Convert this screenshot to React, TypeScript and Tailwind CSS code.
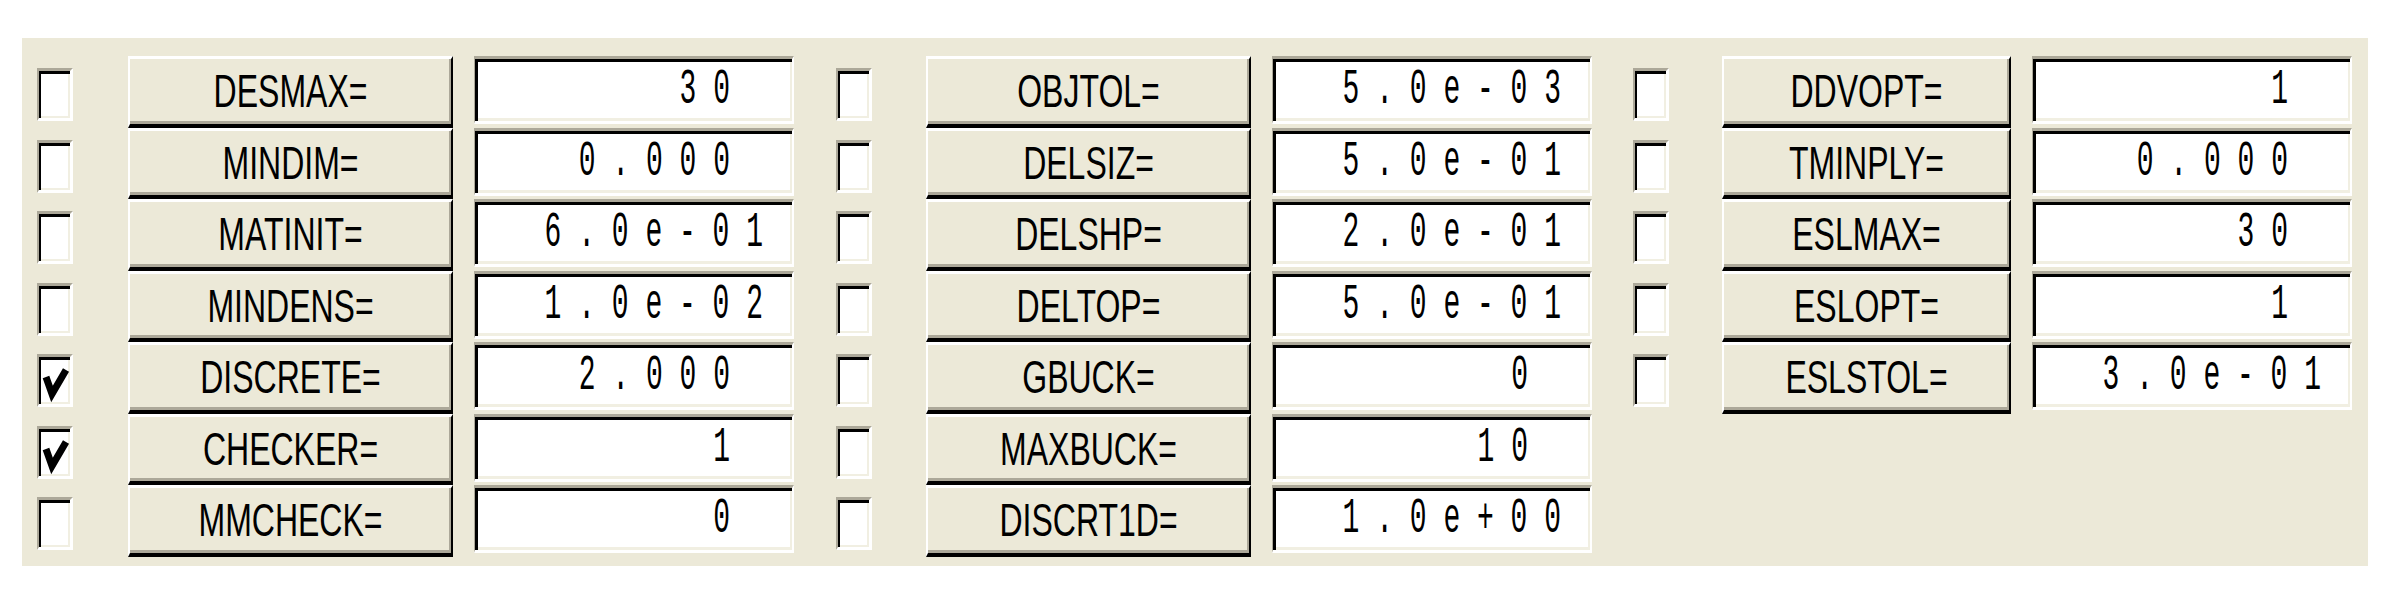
type Param = { label: string; value: string; checked?: boolean };

const col1: Param[] = [
  { label: "DESMAX=", value: "30" },
  { label: "MINDIM=", value: "0.000" },
  { label: "MATINIT=", value: "6.0e-01" },
  { label: "MINDENS=", value: "1.0e-02" },
  { label: "DISCRETE=", value: "2.000", checked: true },
  { label: "CHECKER=", value: "1", checked: true },
  { label: "MMCHECK=", value: "0" },
];

const col2: Param[] = [
  { label: "OBJTOL=", value: "5.0e-03" },
  { label: "DELSIZ=", value: "5.0e-01" },
  { label: "DELSHP=", value: "2.0e-01" },
  { label: "DELTOP=", value: "5.0e-01" },
  { label: "GBUCK=", value: "0" },
  { label: "MAXBUCK=", value: "10" },
  { label: "DISCRT1D=", value: "1.0e+00" },
];

const col3: Param[] = [
  { label: "DDVOPT=", value: "1" },
  { label: "TMINPLY=", value: "0.000" },
  { label: "ESLMAX=", value: "30" },
  { label: "ESLOPT=", value: "1" },
  { label: "ESLSTOL=", value: "3.0e-01" },
];

function CheckBox({ checked }: { checked?: boolean }) {
  return (
    <div className="mt-[12px] h-[53px] w-[36px] shrink-0 border-t-[3px] border-l-[2px] border-r-[3px] border-b-[3px] border-t-[#aca899] border-l-[#aca899] border-r-white border-b-white bg-white shadow-[inset_2px_3px_0_#000,inset_-2px_-2px_0_#f1efe2]">
      {checked && (
        <svg width="31" height="47" className="block" viewBox="0 0 31 47">
          <polyline
            points="7,20 13,37 27,13"
            fill="none"
            stroke="#000"
            strokeWidth="7"
            strokeLinejoin="miter"
            strokeMiterlimit="10"
          />
        </svg>
      )}
    </div>
  );
}

function Row({ p, btnW, cbGap }: { p: Param; btnW: string; cbGap: string }) {
  const exp = p.value.includes("e");
  return (
    <div className="flex h-[71.5px] items-start">
      <CheckBox checked={p.checked} />
      <div
        className={`${cbGap} ${btnW} flex h-full shrink-0 items-center justify-center border-t-[3px] border-l-[2px] border-r-[2px] border-b-[4px] border-t-white border-l-white border-r-black border-b-black bg-[#ece9d8] shadow-[inset_-2px_-3px_0_#aca899]`}
      >
        <span className="inline-block scale-y-[1.45] font-['Liberation_Sans',Arial,sans-serif] text-[32px] leading-none text-black">
          {p.label}
        </span>
      </div>
      <div
        className={`ml-[21px] flex h-[68px] w-[320px] shrink-0 items-center justify-end border-t-[3px] border-l-[1px] border-r-[2px] border-b-[3px] border-t-[#aca899] border-l-[#aca899] border-r-white border-b-white bg-white shadow-[inset_3px_3px_0_#000,inset_-2px_-3px_0_#f1efe2] ${
          exp ? "pr-[29px]" : "pr-[62px]"
        }`}
      >
        <span className="inline-block scale-y-[1.8] whitespace-pre font-['Liberation_Mono','Courier_New',monospace] text-[28px] leading-none text-black">
          {p.value.split("").join(" ")}
        </span>
      </div>
    </div>
  );
}

export default function App() {
  return (
    <div className="min-h-[597px] w-[2406px] bg-white pt-[38px] pl-[22px]">
      <div className="flex h-[528px] w-[2346px] bg-[#ece9d8] pt-[18px] pl-[15px]">
        <div className="flex flex-col">
          {col1.map((p) => (
            <Row key={p.label} p={p} btnW="w-[325px]" cbGap="ml-[55px]" />
          ))}
        </div>
        <div className="ml-[42px] flex flex-col">
          {col2.map((p) => (
            <Row key={p.label} p={p} btnW="w-[325px]" cbGap="ml-[54px]" />
          ))}
        </div>
        <div className="ml-[41px] flex flex-col">
          {col3.map((p) => (
            <Row key={p.label} p={p} btnW="w-[289px]" cbGap="ml-[53px]" />
          ))}
        </div>
      </div>
    </div>
  );
}
